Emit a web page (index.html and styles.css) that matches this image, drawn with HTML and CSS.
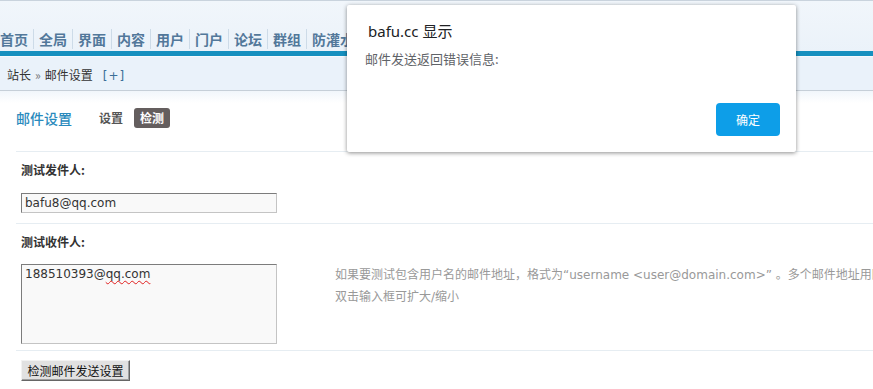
FILE: index.html
```html
<!DOCTYPE html>
<html lang="zh-CN">
<head>
<meta charset="utf-8">
<title>邮件设置</title>
<link rel="stylesheet" href="styles.css">
</head>
<body>
<div class="header">
  <div class="topbar"></div>
  <ul class="nav">
    <li>首页</li><li>全局</li><li>界面</li><li>内容</li><li>用户</li><li>门户</li><li>论坛</li><li>群组</li><li>防灌水</li>
  </ul>
  <div class="bluebar"></div>
  <div class="crumb">站长<span class="raquo">»</span>邮件设置<span class="plus">[+]</span></div>
</div>

<div class="main">
  <div class="titlerow">
    <h3 class="title">邮件设置</h3>
    <span class="tab">设置</span>
    <span class="tab current">检测</span>
  </div>

  <div class="form">
    <div class="label">测试发件人:</div>
    <div class="field">
      <input class="txt" type="text" value="bafu8@qq.com">
    </div>
    <div class="label">测试收件人:</div>
    <div class="field field-area">
      <div class="area" role="textbox">188510393@<span class="misspell">qq.com</span></div>
      <div class="hint">
        <div>如果要测试包含用户名的邮件地址，格式为“username &lt;user@domain.com&gt;” 。多个邮件地址用回车分隔</div>
        <div>双击输入框可扩大/缩小</div>
      </div>
    </div>
    <div class="submit">
      <button class="btn" type="button">检测邮件发送设置</button>
    </div>
  </div>
</div>

<div class="dialog">
  <div class="dlg-title">bafu.cc 显示</div>
  <div class="dlg-msg">邮件发送返回错误信息:</div>
  <div class="dlg-actions">
    <button class="dlg-ok" type="button">确定</button>
  </div>
</div>
</body>
</html>
```

FILE: styles.css
```css
html, body {
  margin: 0;
  padding: 0;
  overflow: hidden;
  background: #fff;
}
body {
  font: 12px/1.5 "DejaVu Sans", "Noto Sans CJK SC", sans-serif;
  color: #333;
  width: 873px;
  height: 389px;
  position: relative;
}

/* header */
.header {
  background: linear-gradient(#f1f6fb, #e6eff8);
  border-top: 1px solid #c9d3dd;
}
.topbar {
  height: 25px;
}
.nav {
  list-style: none;
  margin: 0 0 0 -6px;
  padding: 0;
  height: 25px;
  display: flex;
  align-items: center;
  white-space: nowrap;
}
.nav li {
  font: bold 14px/20px "Noto Sans CJK SC", sans-serif;
  color: #52789a;
  padding: 0 5px 0 5px;
  border-left: 1px solid #cddbe8;
  flex: none;
}
.nav li:first-child {
  border-left-color: transparent;
}
.bluebar {
  height: 5px;
  background: #1690bf;
  border-bottom: 1px solid #f6fafd;
}
.crumb {
  height: 31px;
  line-height: 31px;
  padding: 2px 0 0 7px;
  background: #eaf2fa;
  border-bottom: 1px solid #c6cfd8;
  font-family: "Noto Sans CJK SC", sans-serif;
  color: #333;
}
.raquo {
  color: #777;
  margin: 0 4px;
}
.plus {
  color: #3b6e98;
  margin-left: 10px;
  font-family: "DejaVu Sans", sans-serif;
  letter-spacing: 1px;
}

/* main */
.main {
  padding: 17px 0 0 16px;
  background: linear-gradient(#f1f6fb, #fff 12px);
}
.titlerow {
  height: 20px;
  display: flex;
  align-items: center;
}
.title {
  margin: 0 27px 0 0;
  font: 500 14px/20px "Noto Sans CJK SC", sans-serif;
  color: #2a8abd;
}
.tab {
  font: bold 12px/18px "Noto Sans CJK SC", sans-serif;
  color: #555;
  margin-right: 11px;
}
.tab.current {
  background: #645e5e;
  color: #fff;
  border-radius: 3px;
  padding: 1px 6px;
}

.form {
  margin-top: 23px;
}
.label {
  border-top: 1px solid #e6edf2;
  padding: 8px 0 0 5px;
  font: bold 12px/20px "Noto Sans CJK SC", sans-serif;
  color: #333;
}
.field {
  padding: 13px 0 10px 5px;
  display: flex;
  align-items: flex-start;
}
.field-area {
  padding-top: 12px;
  padding-bottom: 6px;
}
.txt {
  box-sizing: border-box;
  width: 256px;
  height: 20px;
  margin: 0;
  padding: 0 3px;
  border: 1px solid #c4c4c4;
  border-top-color: #7c7c7c;
  border-left-color: #7c7c7c;
  background: #f9f9f9;
  font: 12px "DejaVu Sans", sans-serif;
  color: #333;
  flex: none;
}
.area {
  box-sizing: border-box;
  width: 256px;
  height: 80px;
  flex: none;
  margin: 0;
  padding: 1px 3px;
  border: 1px solid #c4c4c4;
  border-top-color: #7c7c7c;
  border-left-color: #7c7c7c;
  background: #f9f9f9;
  font: 12px/16px "DejaVu Sans", sans-serif;
  color: #333;
}
.misspell {
  text-decoration: underline wavy #e02020;
  text-decoration-thickness: 1px;
  text-underline-offset: 2px;
}
.hint {
  margin-left: 58px;
  font: 12px/22px "DejaVu Sans", "Noto Sans CJK SC", sans-serif;
  color: #999;
  white-space: nowrap;
}
.submit {
  border-top: 1px solid #e6edf2;
  padding: 9px 0 0 5px;
}
.btn {
  box-sizing: border-box;
  height: 21px;
  width: 109px;
  margin: 0;
  padding: 0;
  background: #e1e1e1;
  border: 1px solid #666;
  border-top-color: #f2f2f2;
  border-left-color: #f2f2f2;
  box-shadow: inset -1px -1px 0 #a0a0a0;
  font: 12px/19px "Noto Sans CJK SC", sans-serif;
  color: #111;
}

/* alert dialog (overlay) */
.dialog {
  position: absolute;
  left: 347px;
  top: 5px;
  width: 449px;
  height: 147px;
  box-sizing: border-box;
  padding: 16px 16px 16px 0;
  background: #fff;
  border-radius: 2px;
  box-shadow: 0 1px 4px rgba(0, 0, 0, 0.45);
  display: flex;
  flex-direction: column;
}
.dlg-title {
  padding-left: 21px;
  font: 15px/20px "Noto Sans", "Noto Sans CJK SC", sans-serif;
  color: #202124;
}
.dlg-msg {
  margin-top: 9px;
  padding-left: 18px;
  font: 13px/18px "Noto Sans CJK SC", sans-serif;
  color: #5f6368;
}
.dlg-actions {
  margin-top: auto;
  display: flex;
  justify-content: flex-end;
}
.dlg-ok {
  width: 64px;
  height: 33px;
  margin: 0;
  padding: 0;
  border: none;
  border-radius: 4px;
  background: #0d9ee8;
  color: #fff;
  font: 12px "Noto Sans CJK SC", sans-serif;
}
```
